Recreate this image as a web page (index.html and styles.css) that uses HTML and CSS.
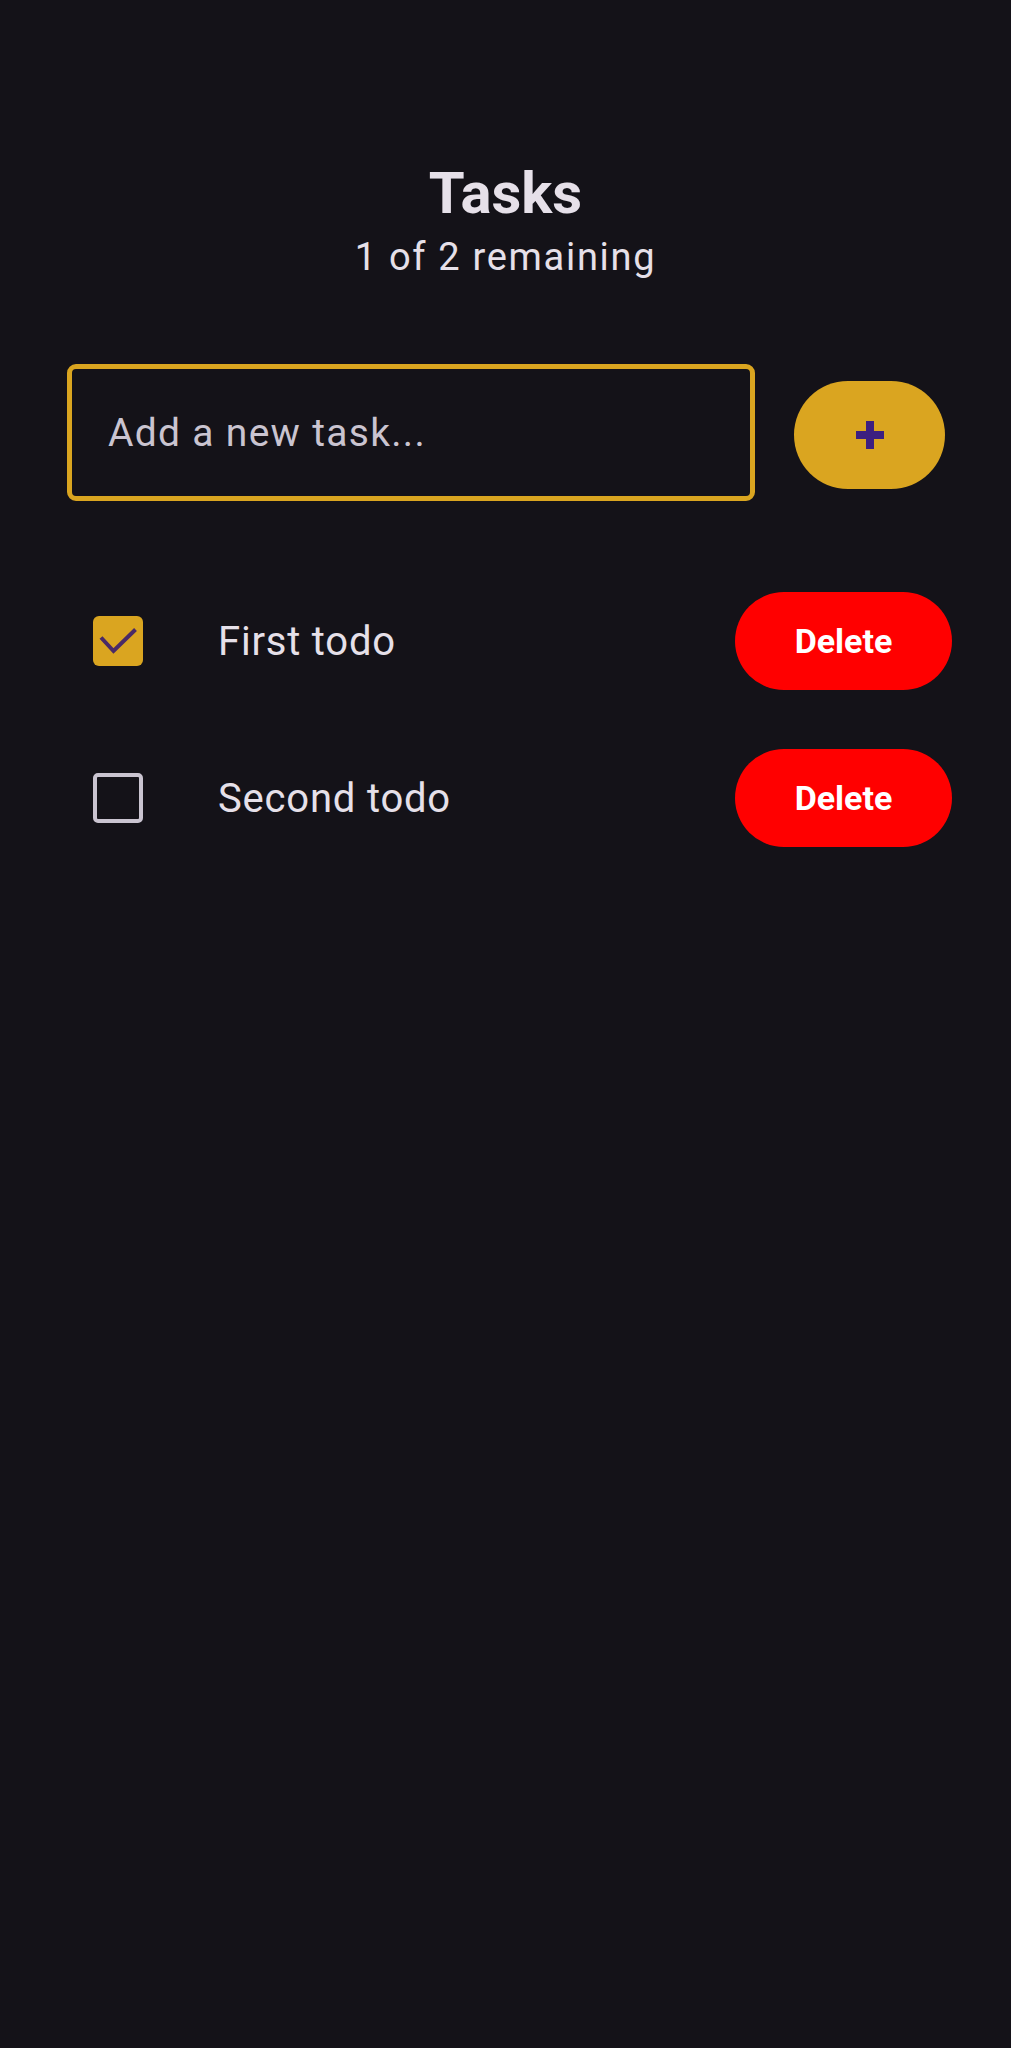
FILE: index.html
```html
<!DOCTYPE html>
<html lang="en">
<head>
<meta charset="utf-8">
<title>Tasks</title>
<link rel="stylesheet" href="styles.css">
</head>
<body>
<main class="app">
  <header class="header">
    <h1 class="title">Tasks</h1>
    <p class="subtitle">1 of 2 remaining</p>
  </header>
  <div class="add-row">
    <input class="task-input" type="text" placeholder="Add a new task...">
    <button class="add-btn" aria-label="Add">
      <svg width="32" height="32" viewBox="0 0 32 32"><path d="M16 2v28M2 16h28" stroke="#3d1f80" stroke-width="8" fill="none"/></svg>
    </button>
  </div>
  <ul class="list">
    <li class="item">
      <span class="check checked">
        <svg width="50" height="50" viewBox="0 0 50 50"><path d="M8 21.5L20.5 35L42.5 13.5" stroke="#4a2a66" stroke-width="4" fill="none"/></svg>
      </span>
      <span class="label">First todo</span>
      <button class="del-btn">Delete</button>
    </li>
    <li class="item">
      <span class="check"></span>
      <span class="label">Second todo</span>
      <button class="del-btn">Delete</button>
    </li>
  </ul>
</main>
</body>
</html>
```
FILE: styles.css
```css
html, body {
  margin: 0;
  padding: 0;
  background: #141218;
}
body {
  min-height: 2048px;
  font-family: Roboto, "Noto Sans", sans-serif;
  color: #e6e0e9;
}
.app {
  display: flex;
  flex-direction: column;
}
.header {
  display: flex;
  flex-direction: column;
  align-items: center;
  padding-top: 159px;
}
.title {
  margin: 0;
  font-size: 58px;
  line-height: 68px;
  font-weight: 700;
  color: #e6e0e9;
}
.subtitle {
  margin: 8px 0 0;
  font-size: 38px;
  line-height: 45px;
  font-weight: 400;
  letter-spacing: 1.7px;
  color: #e6e0e9;
}
.add-row {
  display: flex;
  align-items: center;
  gap: 39px;
  padding: 0 66px 0 67px;
  margin-top: 84px;
}
.task-input {
  box-sizing: border-box;
  width: 688px;
  height: 137px;
  margin: 0;
  border: 5px solid #daa520;
  border-radius: 9px;
  background: #141218;
  padding: 0 0 0 36px;
  font-family: Roboto, "Noto Sans", sans-serif;
  font-size: 39px;
  letter-spacing: 1.3px;
  color: #e6e0e9;
  outline: none;
}
.task-input::placeholder {
  color: #cac4d0;
  opacity: 1;
}
.add-btn {
  width: 151px;
  height: 108px;
  margin-top: 4px;
  border: none;
  border-radius: 54px;
  background: #daa520;
  display: flex;
  align-items: center;
  justify-content: center;
  padding: 0;
}
.list {
  list-style: none;
  margin: 91px 0 0;
  padding: 0 59px 0 93px;
  display: flex;
  flex-direction: column;
  gap: 59px;
}
.item {
  display: flex;
  align-items: center;
  height: 98px;
}
.check {
  box-sizing: border-box;
  width: 50px;
  height: 50px;
  border: 4px solid #cac4d0;
  border-radius: 5px;
  flex: none;
}
.check.checked {
  border: none;
  background: #daa520;
  border-radius: 6px;
}
.check svg {
  display: block;
}
.label {
  flex: 1;
  margin-left: 75px;
  font-size: 40px;
  letter-spacing: 0.8px;
  color: #e6e0e9;
}
.del-btn {
  width: 217px;
  height: 98px;
  border: none;
  border-radius: 49px;
  background: #ff0000;
  color: #ffffff;
  font-family: Roboto, "Noto Sans", sans-serif;
  font-size: 34px;
  font-weight: 700;
  padding: 0;
}
```
